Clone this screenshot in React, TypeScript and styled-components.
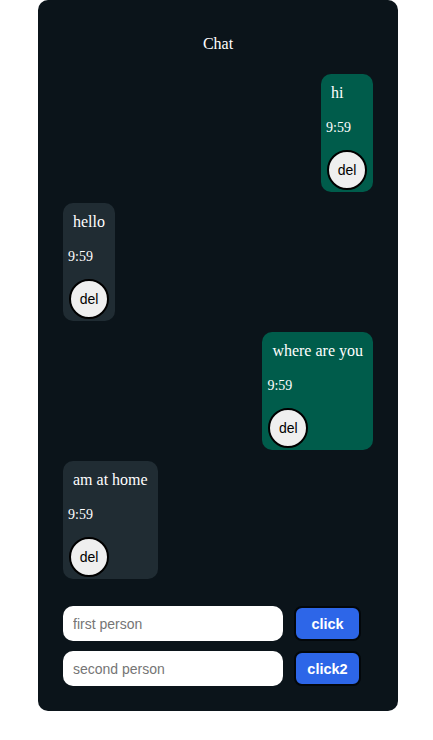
import React from "react";
import styled, { createGlobalStyle } from "styled-components";

const Global = createGlobalStyle`
  html, body { margin: 0; padding: 0; background: #ffffff; }
  body { font-family: "Liberation Serif", "Times New Roman", serif; }
`;

const Page = styled.div`
  padding-left: 38px;
`;

const Card = styled.div`
  width: 360px;
  box-sizing: border-box;
  background: #0b141a;
  border-radius: 10px;
  padding: 35px 25px 25px;
  display: flex;
  flex-direction: column;
`;

const Title = styled.div`
  color: #ffffff;
  font-size: 16px;
  line-height: 18px;
  text-align: center;
  margin-bottom: 21px;
`;

const List = styled.div`
  display: flex;
  flex-direction: column;
  gap: 11px;
`;

const Bubble = styled.div<{ $mine: boolean }>`
  align-self: ${(p) => (p.$mine ? "flex-end" : "flex-start")};
  background: ${(p) => (p.$mine ? "#005c4b" : "#202c33")};
  border-radius: 10px;
  padding: 5px 5px 2px;
  color: #ffffff;
  display: flex;
  flex-direction: column;
  align-items: flex-start;
`;

const Text = styled.div`
  padding: 5px;
  font-size: 16px;
  line-height: 18px;
  white-space: nowrap;
`;

const Time = styled.div`
  margin-top: 13px;
  font-size: 14px;
  line-height: 15px;
`;

const DelButton = styled.button`
  margin: 15px 1px 0;
  width: 40px;
  height: 40px;
  box-sizing: border-box;
  border-radius: 50%;
  border: 2px solid #000000;
  background: #efefef;
  color: #000000;
  font-family: "Liberation Sans", Arial, sans-serif;
  font-size: 14px;
  padding: 0;
`;

const Form = styled.div`
  margin-top: 27px;
  display: flex;
  flex-direction: column;
  gap: 10px;
`;

const Row = styled.div`
  display: flex;
  gap: 11px;
`;

const Input = styled.input`
  width: 220px;
  height: 35px;
  box-sizing: border-box;
  border: none;
  border-radius: 10px;
  background: #ffffff;
  padding: 0 10px;
  font-family: "Liberation Sans", Arial, sans-serif;
  font-size: 14px;
  outline: none;
  &::placeholder { color: #757575; }
`;

const SendButton = styled.button`
  width: 67px;
  height: 35px;
  box-sizing: border-box;
  border: 2px solid #03070a;
  border-radius: 8px;
  background: #2d66e8;
  color: #ffffff;
  font-family: "Liberation Sans", Arial, sans-serif;
  font-weight: bold;
  font-size: 14.5px;
  padding: 0;
`;

const messages = [
  { text: "hi", mine: true },
  { text: "hello", mine: false },
  { text: "where are you", mine: true },
  { text: "am at home", mine: false },
];

export default function App() {
  return (
    <>
      <Global />
      <Page>
        <Card>
          <Title>Chat</Title>
          <List>
            {messages.map((m, i) => (
              <Bubble key={i} $mine={m.mine}>
                <Text>{m.text}</Text>
                <Time>9:59</Time>
                <DelButton>del</DelButton>
              </Bubble>
            ))}
          </List>
          <Form>
            <Row>
              <Input placeholder="first person" />
              <SendButton>click</SendButton>
            </Row>
            <Row>
              <Input placeholder="second person" />
              <SendButton>click2</SendButton>
            </Row>
          </Form>
        </Card>
      </Page>
    </>
  );
}
